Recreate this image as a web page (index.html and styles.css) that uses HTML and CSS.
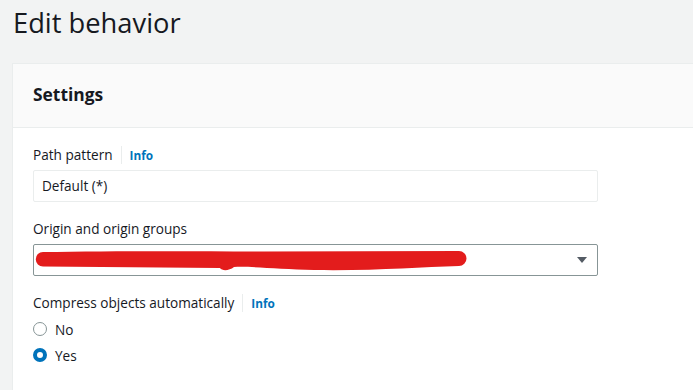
FILE: index.html
```html
<!DOCTYPE html>
<html>
<head>
<meta charset="utf-8">
<link rel="stylesheet" href="styles.css">
</head>
<body>
<h1 class="page-title">Edit behavior</h1>
<div class="card">
  <div class="card-header"><h2 class="card-title">Settings</h2></div>
  <div class="card-body">
    <div class="field">
      <div class="label">Path pattern<span class="info">Info</span></div>
      <div class="input">Default (*)</div>
    </div>
    <div class="field">
      <div class="label">Origin and origin groups</div>
      <div class="select">
        <svg class="scribble" width="440" height="30" viewBox="0 0 440 30">
          <path d="M9 8 C70 7 150 7 230 7.5 L425 7 A7.5 7.5 0 0 1 425 22 C385 23 340 27 280 26 C245 25 215 22 200 23 C195 27 188 27 186 24 L9 22.5 A7 7 0 0 1 9 8 Z" fill="#e31c1c"/>
        </svg>
        <svg class="caret" width="10" height="6" viewBox="0 0 10 6"><path d="M0 0 H10 L5 6 Z" fill="#545b64"/></svg>
      </div>
    </div>
    <div class="field">
      <div class="label">Compress objects automatically<span class="info">Info</span></div>
      <div class="radios">
        <div class="radio"><span class="dot"></span><span>No</span></div>
        <div class="radio"><span class="dot checked"></span><span>Yes</span></div>
      </div>
    </div>
  </div>
</div>
</body>
</html>
```
FILE: styles.css
```css
html, body {
  margin: 0;
  padding: 0;
  height: 100%;
  overflow: hidden;
}
body {
  background: #f2f3f3;
  font-family: "Open Sans", "Noto Sans", sans-serif;
  color: #16191f;
  display: flex;
  flex-direction: column;
}
.page-title {
  margin: 0;
  padding: 4px 13px 21px;
  font-size: 27.3px;
  font-weight: 400;
  line-height: 38px;
}
.card {
  flex: 1;
  margin-left: 12px;
  background: #fff;
  border-left: 1px solid #eaeded;
  border-top: 1px solid #eaeded;
}
.card-header {
  background: #fafafa;
  height: 64px;
  box-sizing: border-box;
  border-bottom: 1px solid #eaeded;
  display: flex;
  align-items: center;
  padding: 0 0 4px 20px;
}
.card-title {
  margin: 0;
  font-size: 17.4px;
  font-weight: 700;
  line-height: 24px;
}
.card-body {
  padding: 16px 20px;
  display: flex;
  flex-direction: column;
  gap: 16px;
}
.field {
  display: flex;
  flex-direction: column;
  gap: 4px;
  width: 565px;
}
.label {
  font-size: 13.6px;
  line-height: 22px;
  display: flex;
  align-items: center;
}
.info {
  font-size: 11.8px;
  font-weight: 700;
  color: #0073bb;
  border-left: 1px solid #eaeded;
  margin-left: 8px;
  padding-left: 8px;
  line-height: 18px;
}
.input {
  height: 30px;
  border: 1px solid #eaeded;
  border-radius: 2px;
  background: #fff;
  font-size: 13.6px;
  line-height: 30px;
  padding-left: 8px;
}
.select {
  position: relative;
  height: 30px;
  border: 1px solid #879596;
  border-radius: 2px;
  background: #fff;
  display: flex;
  align-items: center;
  justify-content: flex-end;
  padding-right: 10px;
}
.scribble {
  position: absolute;
  left: 0;
  top: -1px;
}
.caret {
  display: block;
}
.radios {
  display: flex;
  flex-direction: column;
  margin-top: -2px;
}
.radio {
  height: 26px;
  display: flex;
  align-items: center;
  gap: 8px;
  font-size: 13.6px;
}
.dot {
  width: 14px;
  height: 14px;
  box-sizing: border-box;
  border: 1.5px solid #879596;
  border-radius: 50%;
  background: #fff;
}
.dot.checked {
  border: 4px solid #0073bb;
}
```
